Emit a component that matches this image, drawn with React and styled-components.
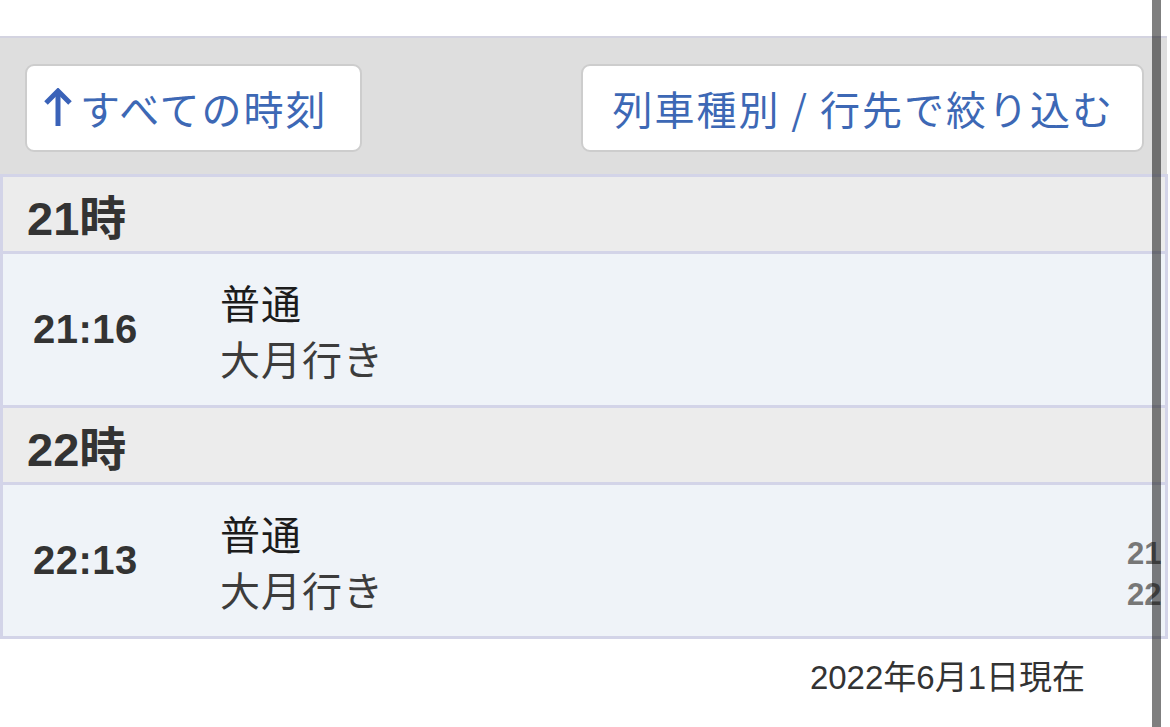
import React from "react";
import styled, { createGlobalStyle } from "styled-components";

const GlobalStyle = createGlobalStyle`
  html, body {
    margin: 0;
    padding: 0;
    background: #ffffff;
  }
  body {
    font-family: "Liberation Sans", "Noto Sans CJK JP", sans-serif;
    color: #333333;
  }
`;

const Page = styled.div`
  position: relative;
  width: 1170px;
  height: 727px;
  overflow: hidden;
  background: #ffffff;
`;

const TopSpace = styled.div`
  height: 36px;
`;

const Toolbar = styled.div`
  display: flex;
  justify-content: space-between;
  align-items: flex-start;
  width: 1167px;
  box-sizing: border-box;
  height: 138px;
  padding: 26px 23px 0 25px;
  background: #dedede;
  border-top: 2px solid #d3d3e0;
`;

const Button = styled.button`
  display: flex;
  align-items: center;
  gap: 8px;
  height: 88px;
  box-sizing: border-box;
  padding: ${(p) => p.$pad};
  background: #ffffff;
  border: 2px solid #cdcdcd;
  border-radius: 9px;
  color: #3d68b5;
  font-family: "Noto Sans CJK JP", sans-serif;
  font-size: 40px;
  letter-spacing: 2px;
  line-height: 1;
  white-space: nowrap;
  cursor: pointer;
`;

const Table = styled.div`
  width: 1168px;
  box-sizing: border-box;
  border: 3px solid #d3d4e8;
  border-bottom: none;
`;

const HourHeader = styled.div`
  display: flex;
  align-items: center;
  height: 77px;
  box-sizing: border-box;
  padding-left: 24px;
  background: #ececec;
  border-bottom: 3px solid #d3d4e8;
  font-family: "Liberation Sans", "Noto Sans CJK JP", sans-serif;
  font-weight: 700;
  font-size: 47px;
  color: #333333;
`;

const Row = styled.div`
  display: grid;
  grid-template-columns: 187px 1fr;
  align-items: center;
  height: 154px;
  box-sizing: border-box;
  padding-left: 30px;
  background: #eff3f8;
  border-bottom: 3px solid #d3d4e8;
`;

const Time = styled.div`
  font-family: "Liberation Sans", sans-serif;
  font-weight: 700;
  font-size: 40px;
  letter-spacing: 0.5px;
  color: #333333;
`;

const Info = styled.div`
  display: flex;
  flex-direction: column;
  font-family: "Noto Sans CJK JP", sans-serif;
  font-size: 40px;
  letter-spacing: 1px;
  line-height: 56px;
`;

const Kind = styled.span`
  color: #1c1c1c;
`;

const Dest = styled.span`
  color: #3c3c3c;
`;

const Footer = styled.div`
  display: flex;
  justify-content: flex-end;
  padding: 12px 85px 0 0;
  font-family: "Liberation Sans", "Noto Sans CJK JP", sans-serif;
  font-size: 33px;
  color: #333333;
`;

const JumpIndex = styled.div`
  position: absolute;
  left: 1127px;
  top: 533px;
  display: flex;
  flex-direction: column;
  font-family: "Liberation Sans", sans-serif;
  font-weight: 700;
  font-size: 31px;
  line-height: 41px;
  color: #777777;
`;

const ScrollBar = styled.div`
  position: absolute;
  left: 1152px;
  top: 0;
  width: 9px;
  height: 100%;
  background: rgba(0, 0, 0, 0.5);
`;

const ArrowIcon = () => (
  <svg width="28" height="40" viewBox="0 0 28 40" fill="none">
    <path d="M14 38V4" stroke="#3a62b8" strokeWidth="5" />
    <path d="M2 15L14 3L26 15" stroke="#3a62b8" strokeWidth="5" strokeLinejoin="miter" />
  </svg>
);

const hours = [
  { hour: "21時", time: "21:16", kind: "普通", dest: "大月行き" },
  { hour: "22時", time: "22:13", kind: "普通", dest: "大月行き" },
];

export default function App() {
  return (
    <>
      <GlobalStyle />
      <Page>
        <TopSpace />
        <Toolbar>
          <Button $pad="0 32px 0 17px">
            <ArrowIcon />
            すべての時刻
          </Button>
          <Button $pad="0 28px 0 29px">列車種別 / 行先で絞り込む</Button>
        </Toolbar>
        <Table>
          {hours.map((h) => (
            <React.Fragment key={h.hour}>
              <HourHeader>{h.hour}</HourHeader>
              <Row>
                <Time>{h.time}</Time>
                <Info>
                  <Kind>{h.kind}</Kind>
                  <Dest>{h.dest}</Dest>
                </Info>
              </Row>
            </React.Fragment>
          ))}
        </Table>
        <Footer>2022年6月1日現在</Footer>
        <JumpIndex>
          <span>21</span>
          <span>22</span>
        </JumpIndex>
        <ScrollBar />
      </Page>
    </>
  );
}
